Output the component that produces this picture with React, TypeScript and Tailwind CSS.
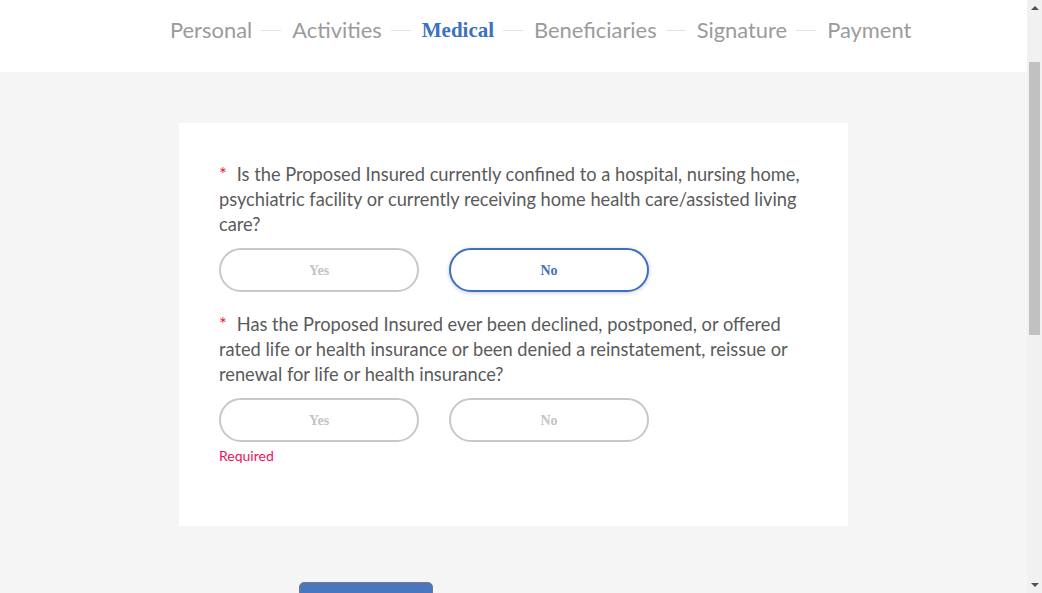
const STEPS = ['Personal', 'Activities', 'Medical', 'Beneficiaries', 'Signature', 'Payment'];

const QUESTIONS = [
  {
    text: 'Is the Proposed Insured currently confined to a hospital, nursing home, psychiatric facility or currently receiving home health care/assisted living care?',
    answer: 'No',
    error: false,
  },
  {
    text: 'Has the Proposed Insured ever been declined, postponed, or offered rated life or health insurance or been denied a reinstatement, reissue or renewal for life or health insurance?',
    answer: null,
    error: true,
  },
];

function ChoiceButton({ label, selected }: { label: string; selected: boolean }) {
  return (
    <button
      className={
        selected
          ? 'w-[200px] h-[44px] rounded-full border-2 border-[#3d6fc2] bg-white text-[#3d6fc2] text-[14px] font-bold font-["Liberation_Serif",serif] shadow-[0_1px_4px_rgba(0,0,0,0.2)]'
          : 'w-[200px] h-[44px] rounded-full border-2 border-[#c8c8c8] bg-white text-[#c4c4c4] text-[14px] font-bold font-["Liberation_Serif",serif]'
      }
    >
      {label}
    </button>
  );
}

// fake classic scrollbar, sits over the right edge of the page
function Scrollbar() {
  return (
    <div className="fixed top-0 right-0 w-[15px] h-full bg-[#f1f1f1] flex flex-col items-center">
      <svg className="mt-[5px]" width="8" height="5" viewBox="0 0 8 5">
        <path d="M0 5L4 1L8 5z" fill="#505050" />
      </svg>
      <div className="mt-[52px] w-[11px] h-[273px] bg-[#c1c1c1]" />
      <div className="flex-1" />
      <svg className="mb-[5px]" width="8" height="5" viewBox="0 0 8 5">
        <path d="M0 0L4 4L8 0z" fill="#505050" />
      </svg>
    </div>
  );
}

export default function App() {
  return (
    <div className="min-h-[1220px] bg-[#f5f5f5] font-['Lato',sans-serif]">
      {/* Step header */}
      <div className="h-[72px] bg-white flex items-center pl-[170px] pb-[11px]">
        {STEPS.map((step, i) => (
          <div key={step} className="flex items-center">
            {i > 0 && <span className="w-[20px] h-px bg-[#e2e2e2] ml-[9px] mr-[11px]" />}
            {step === 'Medical' ? (
              <span className="text-[21px] font-bold text-[#3d6fc2] font-['Liberation_Serif',serif]">{step}</span>
            ) : (
              <span className="text-[21.9px] text-[#9b9b9b]">{step}</span>
            )}
          </div>
        ))}
      </div>

      <div className="pl-[179px] pt-[51px]">
        <div className="w-[669px] bg-white pt-[39px] pb-[60px] px-[40px]">
          {QUESTIONS.map((q, i) => (
            <div key={i} className={i > 0 ? 'mt-[20px]' : ''}>
              <p className="text-[18.25px] leading-[25px] text-[#5a5a5a]">
                <span className="inline-block text-[#e8173f] mr-[10px]">*</span>
                {q.text}
              </p>
              <div className="flex gap-[30px] mt-[11px]">
                <ChoiceButton label="Yes" selected={q.answer === 'Yes'} />
                <ChoiceButton label="No" selected={q.answer === 'No'} />
              </div>
              {q.error && <p className="text-[14px] leading-[20px] mt-[4px] text-[#f0115a]">Required</p>}
            </div>
          ))}
        </div>

        <div className="mt-[56px] ml-[120px]">
          <button className="w-[134px] h-[44px] rounded-[5px] bg-[#4a76c0] border border-[#7a7a7a]" />
        </div>
      </div>

      <Scrollbar />
    </div>
  );
}
